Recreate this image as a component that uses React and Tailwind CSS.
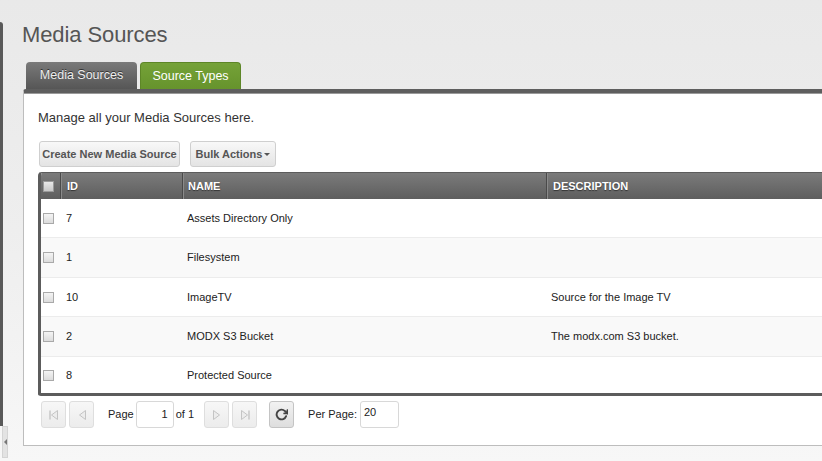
import { FiRotateCw } from 'react-icons/fi';

const FONT = { fontFamily: '"Liberation Sans", Arial, Helvetica, sans-serif' };

const rows = [
  { id: 7, name: 'Assets Directory Only', description: '', h: 'h-[39px]' },
  { id: 1, name: 'Filesystem', description: '', h: 'h-[40px]' },
  { id: 10, name: 'ImageTV', description: 'Source for the Image TV', h: 'h-[39px]' },
  { id: 2, name: 'MODX S3 Bucket', description: 'The modx.com S3 bucket.', h: 'h-[40px]' },
  { id: 8, name: 'Protected Source', description: '', h: 'h-[36px]' },
];

function Checkbox({ dark }) {
  return (
    <span
      className={`block w-[11px] h-[11px] border ${
        dark ? 'border-[#9a9a9a] bg-gradient-to-b from-[#e8e8e8] to-[#c8c8c8]' : 'border-[#a9a9a9] bg-gradient-to-b from-[#f4f4f4] to-[#dcdcdc]'
      }`}
    />
  );
}

function PageButton({ children, active }) {
  return (
    <button
      className={`w-[25px] h-[27px] rounded-[3px] border flex items-center justify-center ${
        active
          ? 'border-[#c4c4c4] bg-gradient-to-b from-[#f2f2f2] to-[#dedede]'
          : 'border-[#dedede] bg-gradient-to-b from-[#f7f7f7] to-[#ececec]'
      }`}
    >
      {children}
    </button>
  );
}

function Tri({ dir, bar }) {
  // pale pagination triangles
  return (
    <svg width="12" height="12" viewBox="0 0 12 12">
      {dir === 'left' ? (
        <>
          <path d="M9.5 1.5 L3.5 6 L9.5 10.5 Z" fill="#ececec" stroke="#c4c4c4" strokeWidth="1" strokeLinejoin="round" />
          {bar && <path d="M2 1.5 V10.5" stroke="#c4c4c4" strokeWidth="1.4" />}
        </>
      ) : (
        <>
          <path d="M2.5 1.5 L8.5 6 L2.5 10.5 Z" fill="#ececec" stroke="#c4c4c4" strokeWidth="1" strokeLinejoin="round" />
          {bar && <path d="M10 1.5 V10.5" stroke="#c4c4c4" strokeWidth="1.4" />}
        </>
      )}
    </svg>
  );
}

export default function App() {
  return (
    <div
      className="w-[822px] h-[461px] overflow-hidden flex bg-gradient-to-b from-[#e9e9e9] via-[#eeeeee] to-[#f7f7f7] text-[#333]"
      style={FONT}
    >
      {/* collapsed sidebar edge */}
      <div className="w-[8px] flex flex-col shrink-0">
        <div className="w-[3px] h-[404px] mt-[22px] bg-[#595959] rounded-tr-[3px]" />
        <div className="w-[6px] h-[32px] ml-[2px] bg-[#e3e3e3] border border-[#d4d4d4] flex items-center justify-center">
          <span className="block w-0 h-0 border-y-[3px] border-y-transparent border-r-[3px] border-r-[#777]" />
        </div>
      </div>

      <div className="flex-1 flex flex-col pl-[14px] min-w-0">
        <h1 className="text-[22px] leading-[22px] mt-[24px] text-[#555] font-normal tracking-[-0.1px]">Media Sources</h1>

        {/* tabs */}
        <div className="flex gap-[3px] mt-[16px] pl-[4px]">
          <div className="w-[111px] h-[27px] rounded-t-[4px] bg-gradient-to-b from-[#7a7a7a] to-[#565656] flex items-center justify-center text-[12.5px] text-[#eee] [text-shadow:0_-1px_0_#333]">
            Media Sources
          </div>
          <div className="w-[101px] h-[27px] rounded-t-[4px] bg-gradient-to-b from-[#75a238] to-[#66932c] border border-b-0 border-[#5d8627] flex items-center justify-center text-[12.5px] text-white">
            Source Types
          </div>
        </div>

        {/* panel */}
        <div className="ml-[1px] h-[357px] bg-white border-t-[4px] border-t-[#5e5e5e] border-l border-l-[#bdbdbd] border-b border-b-[#bdbdbd] rounded-tl-[3px] flex flex-col pl-[14px] shadow-[inset_0_1px_0_#9a9a9a]">
          <p className="text-[13px] leading-[16px] mt-[17px] text-[#333]">Manage all your Media Sources here.</p>

          <div className="flex gap-[10px] mt-[15px] pl-[1px]">
            <button className="w-[141px] h-[26px] rounded-[3px] border border-[#cfcfcf] bg-gradient-to-b from-[#f8f8f8] to-[#e4e4e4] text-[11px] font-bold text-[#555] whitespace-nowrap">
              Create New Media Source
            </button>
            <button className="w-[86px] h-[26px] rounded-[3px] border border-[#cfcfcf] bg-gradient-to-b from-[#f8f8f8] to-[#e4e4e4] text-[11px] font-bold text-[#555] flex items-center justify-center gap-[2px]">
              Bulk Actions
              <span className="block w-0 h-0 border-x-[3px] border-x-transparent border-t-[3px] border-t-[#555] mt-[1px]" />
            </button>
          </div>

          {/* grid */}
          <div className="mt-[5px] w-[800px] border-l-[3px] border-b-[3px] border-t border-[#5c5c5c] rounded-tl-[4px] rounded-bl-[3px] overflow-hidden">
            <div className="h-[26px] flex bg-gradient-to-b from-[#7b7b7b] to-[#5e5e5e] text-white text-[11px] font-bold [text-shadow:0_1px_1px_#333]">
              <div className="w-[20px] flex items-center pl-[2px] border-r border-r-[#4a4a4a]">
                <Checkbox dark />
              </div>
              <div className="w-[122px] flex items-center pl-[5px] border-l border-l-[#8a8a8a] border-r border-r-[#4a4a4a]">ID</div>
              <div className="w-[364px] flex items-center pl-[4px] border-l border-l-[#8a8a8a] border-r border-r-[#4a4a4a]">NAME</div>
              <div className="flex-1 flex items-center pl-[5px] border-l border-l-[#8a8a8a]">DESCRIPTION</div>
            </div>
            {rows.map((r, i) => (
              <div
                key={r.id}
                className={`${r.h} flex items-center text-[11px] text-[#222] ${i % 2 ? 'bg-[#f9f9f9]' : 'bg-white'} ${
                  i < rows.length - 1 ? 'border-b border-b-[#ececec]' : ''
                }`}
              >
                <div className="w-[20px] pl-[2px]">
                  <Checkbox />
                </div>
                <div className="w-[122px] pl-[5px]">{r.id}</div>
                <div className="w-[364px] pl-[4px]">{r.name}</div>
                <div className="flex-1 pl-[4px]">{r.description}</div>
              </div>
            ))}
          </div>

          {/* pagination */}
          <div className="flex items-center mt-[5px] h-[27px] pl-[3px] text-[11px] text-[#222]">
            <div className="flex gap-[3px]">
              <PageButton><Tri dir="left" bar /></PageButton>
              <PageButton><Tri dir="left" /></PageButton>
            </div>
            <span className="ml-[14px]">Page</span>
            <div className="ml-[2px] w-[38px] h-[27px] border border-[#d8d8d8] rounded-[3px] bg-white flex items-center justify-end pr-[5px]">1</div>
            <span className="ml-[2px]">of 1</span>
            <div className="flex gap-[3px] ml-[10px]">
              <PageButton><Tri dir="right" /></PageButton>
              <PageButton><Tri dir="right" bar /></PageButton>
            </div>
            <div className="ml-[12px]">
              <PageButton active>
                <FiRotateCw className="w-[13px] h-[13px] text-[#444]" strokeWidth={3.5} />
              </PageButton>
            </div>
            <span className="ml-[14px]">Per Page:</span>
            <div className="ml-[3px] w-[39px] h-[27px] border border-[#d8d8d8] rounded-[3px] bg-white flex items-center pl-[3px] pb-[4px]">20</div>
          </div>
        </div>
      </div>
    </div>
  );
}
